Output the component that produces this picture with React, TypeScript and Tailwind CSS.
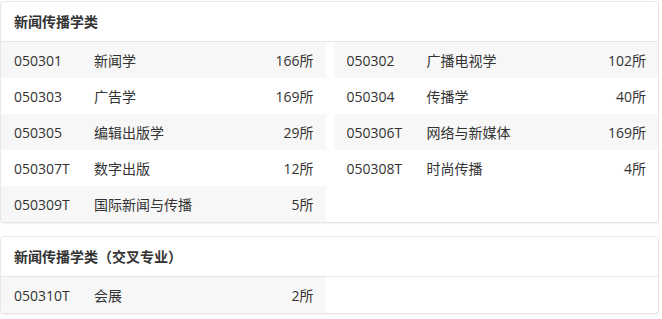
import React from "react";

type Item = { code: string; name: string; count: string };

const group1: Item[] = [
  { code: "050301", name: "新闻学", count: "166所" },
  { code: "050302", name: "广播电视学", count: "102所" },
  { code: "050303", name: "广告学", count: "169所" },
  { code: "050304", name: "传播学", count: "40所" },
  { code: "050305", name: "编辑出版学", count: "29所" },
  { code: "050306T", name: "网络与新媒体", count: "169所" },
  { code: "050307T", name: "数字出版", count: "12所" },
  { code: "050308T", name: "时尚传播", count: "4所" },
  { code: "050309T", name: "国际新闻与传播", count: "5所" },
];

const group2: Item[] = [{ code: "050310T", name: "会展", count: "2所" }];

function Card({ title, items }: { title: string; items: Item[] }) {
  return (
    <div className="w-[659px] rounded-[4px] border border-[#e6e6e6] bg-white shadow-[0_1px_2px_rgba(0,0,0,0.06)] overflow-hidden">
      <div className="h-[40px] flex items-center pl-[13px] text-[14px] font-bold text-[#333] border-b border-[#e6e6e6]">
        {title}
      </div>
      <div className="grid grid-cols-2 gap-x-2">
        {items.map((it, i) => {
          const row = Math.floor(i / 2);
          return (
            <div
              key={it.code}
              className={
                "h-[36px] flex items-center pl-[13px] pr-[12px] text-[14px] text-[#333] " +
                (row % 2 === 0 ? "bg-[#f7f7f7]" : "bg-white")
              }
            >
              <span className="w-[80px] shrink-0">{it.code}</span>
              <span className="flex-1">{it.name}</span>
              <span>{it.count}</span>
            </div>
          );
        })}
      </div>
    </div>
  );
}

export default function App() {
  return (
    <div
      className="w-[662px] h-[319px] bg-white pt-[1px]"
      style={{ fontFamily: '"Open Sans", "Noto Sans CJK SC", sans-serif' }}
    >
      <Card title="新闻传播学类" items={group1} />
      <div className="mt-[13px]">
        <Card title="新闻传播学类（交叉专业）" items={group2} />
      </div>
    </div>
  );
}
